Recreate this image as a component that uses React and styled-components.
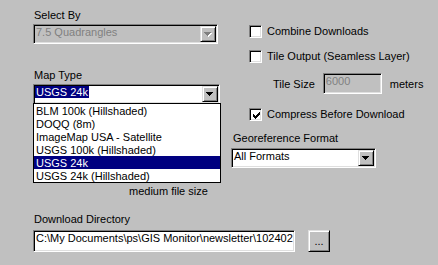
import React from 'react';
import styled, { createGlobalStyle, css } from 'styled-components';

const GlobalStyle = createGlobalStyle`
    html, body {
        margin: 0;
        padding: 0;
        background: #c0c0c0;
    }
    body {
        font-family: "Liberation Sans", Arial, sans-serif;
        font-size: 11px;
        color: #000;
    }
`;

// classic 3D bevels
const sunken = css`
    border: 1px solid;
    border-color: #808080 #fff #fff #808080;
    box-shadow: inset 1px 1px #000, inset -1px -1px #dfdfdf;
`;

const raised = css`
    border: 1px solid;
    border-color: #dfdfdf #000 #000 #dfdfdf;
    box-shadow: inset 1px 1px #fff, inset -1px -1px #808080;
`;

const Panel = styled.div`
    width: 438px;
    height: 265px;
    overflow: hidden;
    box-sizing: border-box;
    padding: 9px 0 0 33px;
    display: flex;
    flex-direction: column;
`;

const Top = styled.div`
    display: flex;
    gap: 10px;
`;

const Column = styled.div`
    width: ${p => p.$w}px;
    display: flex;
    flex-direction: column;
`;

const Label = styled.div`
    line-height: 13px;
    height: 13px;
    padding-left: ${p => p.$indent || 1}px;
    margin-top: ${p => p.$top || 0}px;
    margin-bottom: ${p => p.$bottom ?? 2}px;
    white-space: nowrap;
`;

const ComboWrap = styled.div`
    position: relative;
    width: ${p => p.$w}px;
`;

const Combo = styled.div`
    ${sunken}
    box-sizing: border-box;
    width: 100%;
    height: 20px;
    padding: 1px;
    display: flex;
    align-items: flex-start;
    background: ${p => (p.$disabled ? '#c0c0c0' : '#fff')};
`;

const ComboValue = styled.div`
    flex: 1;
    line-height: 13px;
    padding-left: 1px;
    white-space: nowrap;
    overflow: hidden;
    color: ${p => (p.$disabled ? '#808080' : '#000')};
`;

const Selected = styled.span`
    background: #000080;
    color: #fff;
    padding: 0 1px;
    margin-left: -1px;
`;

const DropButton = styled.div`
    ${raised}
    box-sizing: border-box;
    width: 16px;
    height: 16px;
    background: #c0c0c0;
    display: flex;
    align-items: center;
    justify-content: center;
`;

const DropList = styled.ul`
    position: absolute;
    left: 0;
    top: 19px;
    width: 188px;
    box-sizing: border-box;
    margin: 0;
    padding: 0;
    list-style: none;
    border: 1px solid #000;
    background: #fff;
    z-index: 2;
`;

const ListItem = styled.li`
    height: 13px;
    line-height: 15px;
    padding-left: 2px;
    white-space: nowrap;
    background: ${p => (p.$selected ? '#000080' : 'transparent')};
    color: ${p => (p.$selected ? '#fff' : '#000')};
`;

const Note = styled.div`
    line-height: 13px;
    margin-top: 81px;
    padding-left: 96px;
    white-space: nowrap;
`;

const CheckRow = styled.label`
    display: flex;
    align-items: center;
    gap: 5px;
    height: 13px;
    line-height: 13px;
    padding-left: 18px;
    margin-top: ${p => p.$top}px;
    white-space: nowrap;
`;

const Box = styled.span`
    ${sunken}
    box-sizing: border-box;
    width: 13px;
    height: 13px;
    background: #fff;
    flex: none;
    position: relative;
    svg {
        position: absolute;
        left: 2px;
        top: 2px;
    }
`;

const FieldRow = styled.div`
    display: flex;
    align-items: center;
    gap: 8px;
    padding-left: ${p => p.$indent || 0}px;
    margin-top: ${p => p.$top || 0}px;
`;

const TextField = styled.div`
    ${sunken}
    box-sizing: border-box;
    width: ${p => p.$w}px;
    height: ${p => p.$h}px;
    padding: 1px 1px 1px 2px;
    line-height: 13px;
    white-space: nowrap;
    overflow: hidden;
    background: ${p => (p.$disabled ? '#c0c0c0' : '#fff')};
    color: ${p => (p.$disabled ? '#808080' : '#000')};
`;

const DirRow = styled.div`
    display: flex;
    gap: 13px;
    margin-top: 2px;
`;

const PushButton = styled.button`
    ${raised}
    box-sizing: border-box;
    width: 22px;
    height: 22px;
    padding: 0;
    background: #c0c0c0;
    font: inherit;
    color: #000;
    line-height: 13px;
`;

function Arrow({ disabled }) {
    return (
        <svg width="8" height="5" viewBox="0 0 8 5" shapeRendering="crispEdges">
            {disabled && <path d="M1 1h7v1h-1v1h-1v1h-1v1h-1v-1h-1v-1h-1v-1h-1z" fill="#fff" />}
            <path
                d="M0 0h7v1h-1v1h-1v1h-1v1h-1v-1h-1v-1h-1v-1h-1z"
                fill={disabled ? '#808080' : '#000'}
            />
        </svg>
    );
}

function CheckMark() {
    return (
        <svg width="9" height="9" viewBox="0 0 9 9" shapeRendering="crispEdges">
            <path
                d="M7 1h1v1h-1zM6 2h2v1h-2zM1 3h1v1h-1zM5 3h3v1h-3zM1 4h2v1h-2zM4 4h3v1h-3zM1 5h5v1h-5zM2 6h3v1h-3zM3 7h1v1h-1z"
                fill="#000"
            />
        </svg>
    );
}

function ComboBox({ width, value, disabled, selected, children }) {
    return (
        <ComboWrap $w={width}>
            <Combo $disabled={disabled}>
                <ComboValue $disabled={disabled}>
                    {selected ? <Selected>{value}</Selected> : value}
                </ComboValue>
                <DropButton>
                    <Arrow disabled={disabled} />
                </DropButton>
            </Combo>
            {children}
        </ComboWrap>
    );
}

function CheckBox({ top, checked, children }) {
    return (
        <CheckRow $top={top}>
            <Box>{checked && <CheckMark />}</Box>
            {children}
        </CheckRow>
    );
}

const mapTypes = [
    'BLM 100k (Hillshaded)',
    'DOQQ (8m)',
    'ImageMap USA - Satellite',
    'USGS 100k (Hillshaded)',
    'USGS 24k',
    'USGS 24k (Hillshaded)',
];

export default function App() {
    return (
        <>
            <GlobalStyle />
            <Panel>
                <Top>
                    <Column $w={188}>
                        <Label>Select By</Label>
                        <ComboBox width={185} value="7.5 Quadrangles" disabled />
                        <Label $top={25}>Map Type</Label>
                        <ComboBox width={187} value="USGS 24k" selected>
                            <DropList>
                                {mapTypes.map(t => (
                                    <ListItem key={t} $selected={t === 'USGS 24k'}>
                                        {t}
                                    </ListItem>
                                ))}
                            </DropList>
                        </ComboBox>
                        <Note>medium file size</Note>
                    </Column>
                    <Column $w={207}>
                        <CheckBox top={16}>Combine Downloads</CheckBox>
                        <CheckBox top={12}>Tile Output (Seamless Layer)</CheckBox>
                        <FieldRow $indent={42} $top={10}>
                            <span>Tile Size</span>
                            <TextField $w={59} $h={21} $disabled>6000</TextField>
                            <span>meters</span>
                        </FieldRow>
                        <CheckBox top={14} checked>Compress Before Download</CheckBox>
                        <Label $indent={2} $top={11} $bottom={3}>Georeference Format</Label>
                        <ComboBox width={145} value="All Formats" />
                    </Column>
                </Top>
                <Label $top={15}>Download Directory</Label>
                <DirRow>
                    <TextField $w={262} $h={22}>
                        C:\My Documents\ps\GIS Monitor\newsletter\102402
                    </TextField>
                    <PushButton>...</PushButton>
                </DirRow>
            </Panel>
        </>
    );
}
